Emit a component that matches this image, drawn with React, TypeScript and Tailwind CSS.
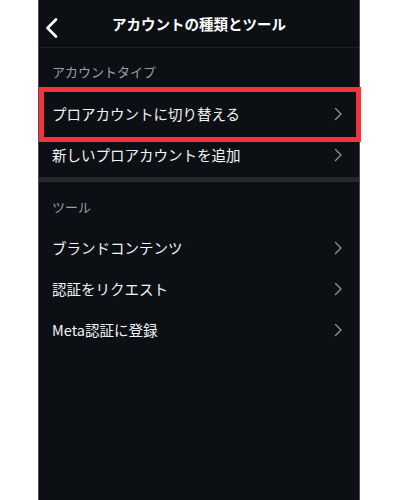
const font = { fontFamily: '"Noto Sans CJK JP", "Noto Sans", sans-serif' };

const ChevronRight = () => (
  <svg width="9" height="14" viewBox="0 0 9 14" fill="none" className="shrink-0">
    <path d="M1.5 1.5L7 7L1.5 12.5" stroke="#8c9095" strokeWidth="1.4" strokeLinecap="round" strokeLinejoin="round" />
  </svg>
);

const BackIcon = () => (
  <svg width="14" height="20" viewBox="0 0 14 20" fill="none">
    <path d="M11 1.5L2.5 10L11 18.5" stroke="#ffffff" strokeWidth="2.6" strokeLinecap="round" strokeLinejoin="round" />
  </svg>
);

function Row({ label, highlighted }: { label: string; highlighted?: boolean }) {
  return (
    <div className="relative flex h-[41px] items-center justify-between pl-[13px] pr-[16px]">
      <span className="text-[14.5px] leading-[20px] text-[#f2f3f5]">{label}</span>
      <ChevronRight />
      {highlighted && (
        <div className="pointer-events-none absolute -top-[6px] -bottom-[8px] left-0 -right-[2px] border-[5px] border-[#f5333a]" />
      )}
    </div>
  );
}

function SectionLabel({ text, top }: { text: string; top: string }) {
  return (
    <div className={`${top} h-[45px] pl-[13px] text-[13px] leading-[20px] text-[#9a9ea4]`}>{text}</div>
  );
}

export default function App() {
  return (
    <div className="flex h-[500px] w-[400px] bg-white" style={font}>
      <div className="ml-[38px] flex h-full w-[322px] flex-col border-x border-[#4a4d52] bg-[#0c1014]">
        <div className="relative flex h-[48px] items-center justify-center border-b border-[#1f2327]">
          <div className="absolute left-[6px] top-[18px]">
            <BackIcon />
          </div>
          <span className="text-[14.5px] font-semibold leading-[20px] text-white">アカウントの種類とツール</span>
        </div>
        <div className="h-[45px] pt-[14px] pl-[13px] text-[13px] leading-[20px] text-[#9a9ea4]">アカウントタイプ</div>
        <Row label="プロアカウントに切り替える" highlighted />
        <Row label="新しいプロアカウントを追加" />
        <div className="mt-[2px] h-[5px] bg-[#25292d]" />
        <div className="h-[45px] pt-[15px] pl-[13px] text-[13px] leading-[20px] text-[#9a9ea4]">ツール</div>
        <Row label="ブランドコンテンツ" />
        <Row label="認証をリクエスト" />
        <Row label="Meta認証に登録" />
      </div>
    </div>
  );
}
